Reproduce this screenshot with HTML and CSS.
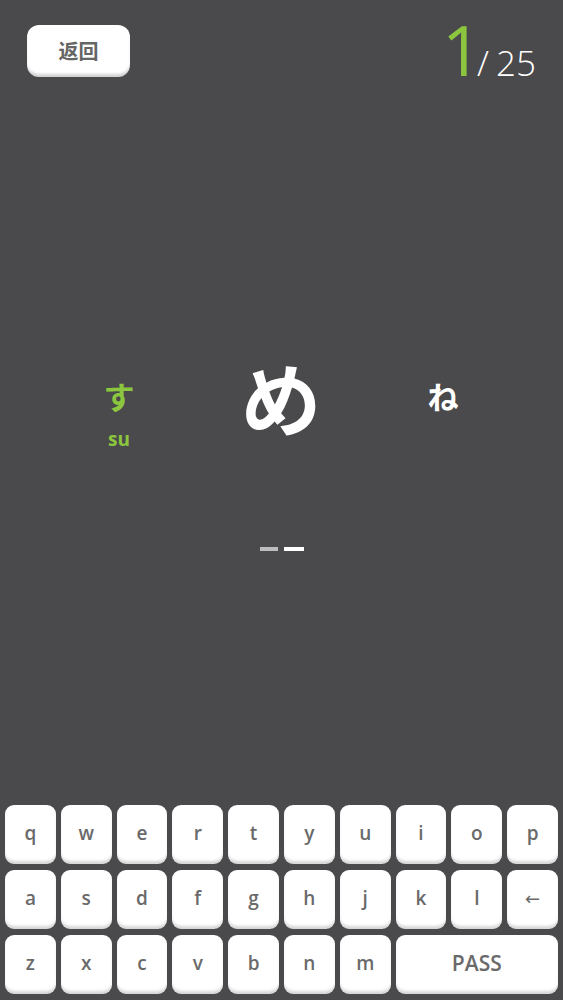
FILE: index.html
```html
<!DOCTYPE html>
<html lang="zh">
<head>
<meta charset="utf-8">
<title>Kana</title>
<link rel="stylesheet" href="styles.css">
</head>
<body>
<div class="app">
  <header class="top">
    <button class="back">返回</button>
    <div class="counter"><span class="cur">1</span><span class="total">/ 25</span></div>
  </header>

  <section class="stage">
    <div class="kana-row">
      <div class="cell prev">
        <div class="kana-side">す</div>
        <div class="romaji">su</div>
      </div>
      <div class="cell">
        <div class="kana-main">め</div>
      </div>
      <div class="cell next">
        <div class="kana-side">ね</div>
      </div>
    </div>
    <div class="slots">
      <span class="slot done"></span>
      <span class="slot"></span>
    </div>
  </section>

  <section class="keyboard">
    <div class="krow">
      <div class="key">q</div><div class="key">w</div><div class="key">e</div><div class="key">r</div><div class="key">t</div>
      <div class="key">y</div><div class="key">u</div><div class="key">i</div><div class="key">o</div><div class="key">p</div>
    </div>
    <div class="krow">
      <div class="key">a</div><div class="key">s</div><div class="key">d</div><div class="key">f</div><div class="key">g</div>
      <div class="key">h</div><div class="key">j</div><div class="key">k</div><div class="key">l</div><div class="key arrow">←</div>
    </div>
    <div class="krow last">
      <div class="key">z</div><div class="key">x</div><div class="key">c</div><div class="key">v</div><div class="key">b</div>
      <div class="key">n</div><div class="key">m</div><div class="key pass">PASS</div>
    </div>
  </section>
</div>
</body>
</html>
```

FILE: styles.css
```css
* { box-sizing: border-box; }
html, body { margin: 0; padding: 0; }
body {
  background: #4a494b;
  font-family: "Open Sans", "Noto Sans", sans-serif;
}
.app {
  height: 1000px;
  display: flex;
  flex-direction: column;
}
.top {
  display: flex;
  justify-content: space-between;
  align-items: flex-start;
  padding: 25px 27px 0 27px;
}
.back {
  width: 103px;
  height: 52px;
  border: none;
  border-radius: 12px;
  background: #fff;
  box-shadow: inset 0 -4px 3px -1px rgba(0,0,0,0.18);
  color: #666;
  font-family: "Noto Sans CJK SC", "Noto Sans", sans-serif;
  font-weight: 700;
  font-size: 20px;
  padding: 0 0 2px 0;
}
.counter {
  display: flex;
  align-items: baseline;
  height: 52px;
  line-height: 52px;
  margin-top: -2px;
  font-weight: 300;
}
.cur {
  color: #8cc63e;
  font-size: 70px;
  font-weight: 400;
  margin-right: -1px;
  letter-spacing: -4px;
}
.total {
  color: #fff;
  font-size: 35px;
  word-spacing: -2px;
}
.stage {
  flex: 1;
  display: flex;
  flex-direction: column;
}
.kana-row {
  margin-top: 271px;
  padding-left: 38px;
  display: grid;
  grid-template-columns: 162px 162px 162px;
  align-items: start;
  font-family: "Noto Sans CJK JP", "Noto Sans", sans-serif;
  font-weight: 700;
}
.cell {
  display: flex;
  flex-direction: column;
  align-items: center;
}
.kana-main {
  color: #fff;
  font-size: 80px;
  line-height: 94px;
}
.kana-side {
  font-size: 31px;
  line-height: 36px;
  color: #fff;
}
.prev { margin-top: 30px; color: #8cc63e; }
.prev .kana-side { color: #8cc63e; }
.next { margin-top: 30px; }
.romaji {
  margin-top: 15px;
  font-family: "Open Sans", "Noto Sans", sans-serif;
  font-size: 19px;
  line-height: 20px;
  font-weight: 700;
  color: #8cc63e;
}
.slots {
  margin-top: 98px;
  display: flex;
  justify-content: center;
  gap: 6px;
}
.slot {
  width: 20px;
  height: 4px;
  background: #fff;
}
.slot.done {
  width: 18px;
  background: #bdbdbd;
}
.keyboard {
  padding: 0 5px 6px 5px;
  display: flex;
  flex-direction: column;
  gap: 6px;
}
.krow {
  display: grid;
  grid-template-columns: repeat(10, 1fr);
  gap: 5px;
  height: 59px;
}
.key {
  background: #fff;
  border-radius: 9px;
  box-shadow: inset 0 -4px 3px -1px rgba(0,0,0,0.16);
  display: flex;
  align-items: center;
  justify-content: center;
  color: #6a6a6a;
  font-size: 19px;
  font-weight: 600;
  padding-bottom: 3px;
}
.key.arrow { font-size: 18px; font-family: "DejaVu Sans", sans-serif; font-weight: 400; }
.key.pass {
  grid-column: span 3;
  font-size: 21px;
}
```
